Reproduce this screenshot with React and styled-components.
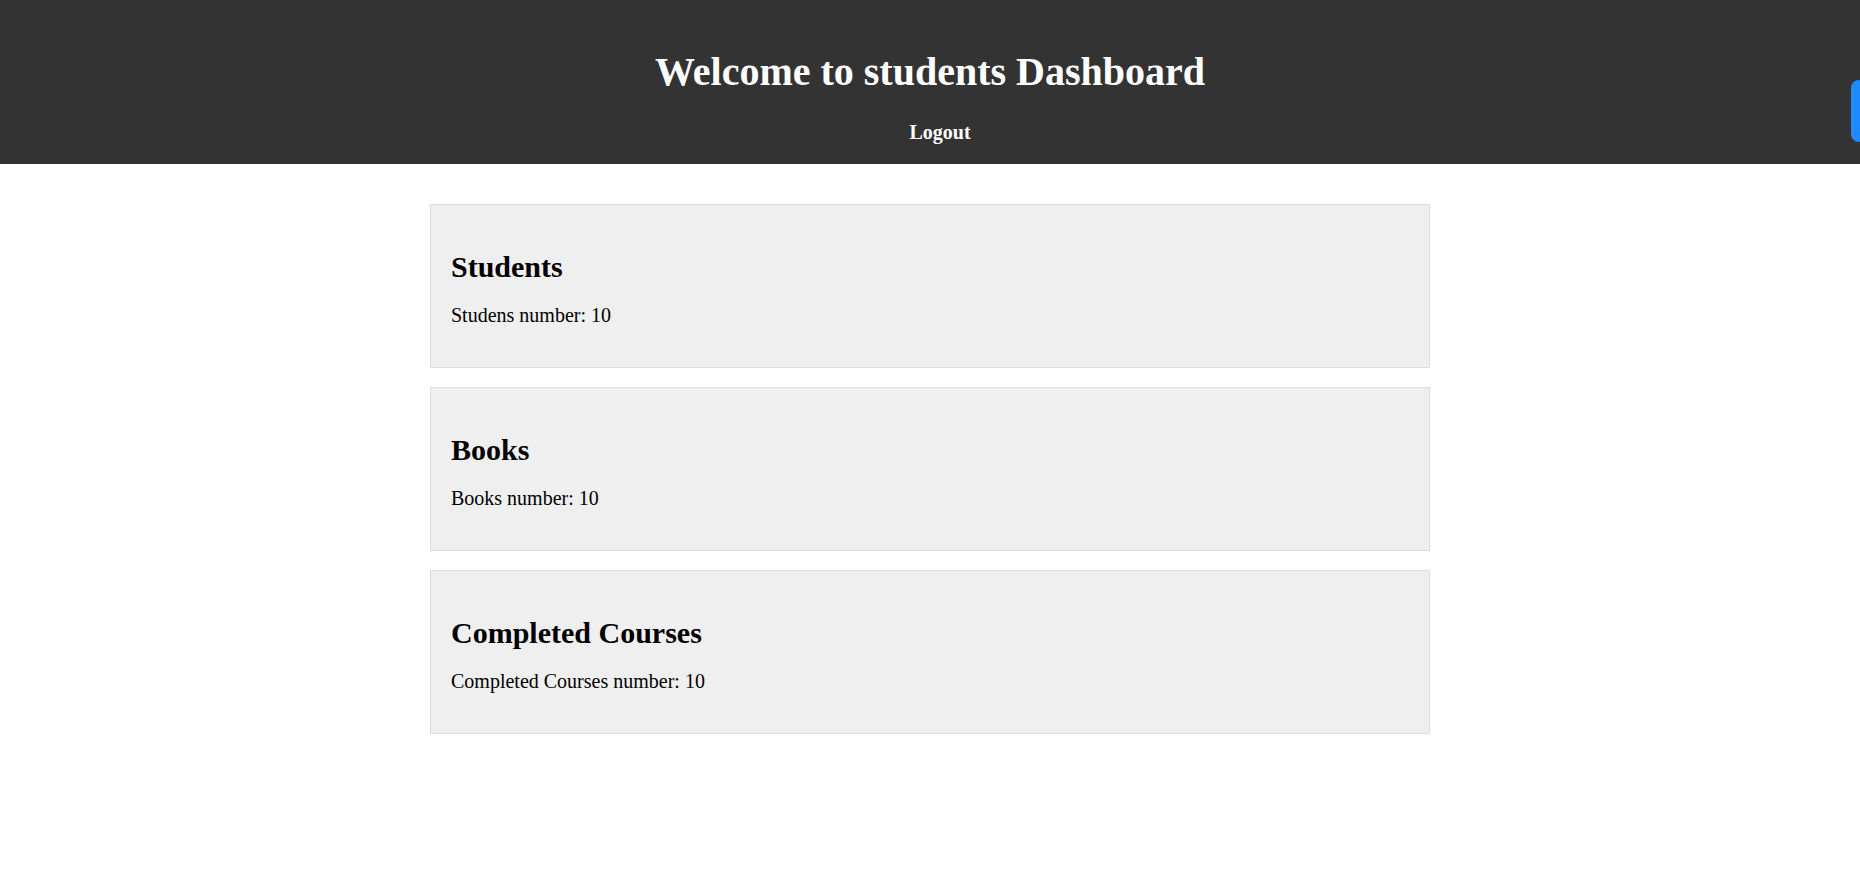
import styled, { createGlobalStyle } from "styled-components"

const GlobalStyle = createGlobalStyle`
body {
  margin: 0;
  font-family: "Liberation Serif", "Times New Roman", serif;
  background: #fff;
  color: #000;
}
`

const stats = [
  { title: "Students", label: "Studens number", value: 10 },
  { title: "Books", label: "Books number", value: 10 },
  { title: "Completed Courses", label: "Completed Courses number", value: 10 },
]

const App = () => {
  return (
    <>
      <GlobalStyle />
      <Header>
        <Title>Welcome to students Dashboard</Title>
        <LogoutButton>Logout</LogoutButton>
      </Header>
      <Main>
        {stats.map((s) => (
          <Card key={s.title}>
            <CardTitle>{s.title}</CardTitle>
            <CardText>
              {s.label}: {s.value}
            </CardText>
          </Card>
        ))}
      </Main>
      <SideTab aria-label="open panel" />
    </>
  )
}

export default App

const Header = styled.header`
background: #333;
color: #fff;
text-align: center;
padding: 20px 20px 20px;
`
const Title = styled.h1`
font-size: 40px;
margin: 28px 0 26px;
line-height: normal;
`
const LogoutButton = styled.a`
display: inline-block;
margin-left: 20px;
color: #fff;
font-size: 20px;
font-weight: bold;
cursor: pointer;
`
const Main = styled.main`
width: 1000px;
margin: 40px auto;
display: flex;
flex-direction: column;
gap: 19px;
`
const Card = styled.section`
background: #efefef;
border: 1px solid #ddd;
padding: 20px;
`
const CardTitle = styled.h2`
font-size: 30px;
margin: 25px 0 20px;
`
const CardText = styled.p`
font-size: 20px;
margin: 0 0 20px;
`
const SideTab = styled.button`
position: fixed;
top: 80px;
right: -30px;
width: 39px;
height: 62px;
border: none;
border-radius: 8px;
background: #1e8cff;
padding: 0;
`
